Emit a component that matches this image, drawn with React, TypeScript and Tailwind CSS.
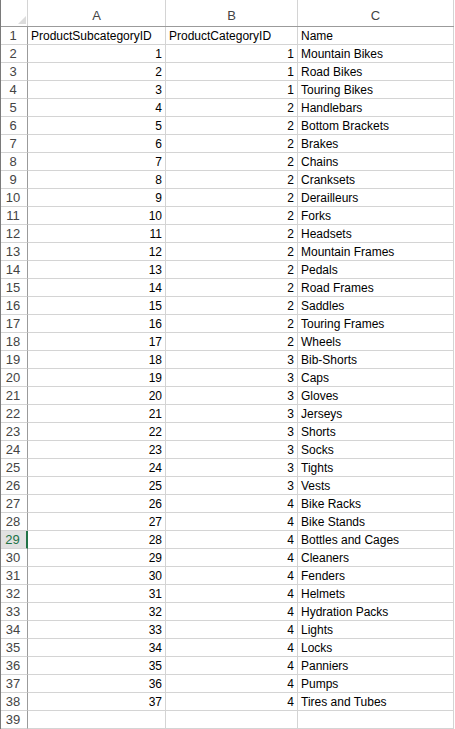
const rows: [number, number, string][] = [
  [1, 1, "Mountain Bikes"],
  [2, 1, "Road Bikes"],
  [3, 1, "Touring Bikes"],
  [4, 2, "Handlebars"],
  [5, 2, "Bottom Brackets"],
  [6, 2, "Brakes"],
  [7, 2, "Chains"],
  [8, 2, "Cranksets"],
  [9, 2, "Derailleurs"],
  [10, 2, "Forks"],
  [11, 2, "Headsets"],
  [12, 2, "Mountain Frames"],
  [13, 2, "Pedals"],
  [14, 2, "Road Frames"],
  [15, 2, "Saddles"],
  [16, 2, "Touring Frames"],
  [17, 2, "Wheels"],
  [18, 3, "Bib-Shorts"],
  [19, 3, "Caps"],
  [20, 3, "Gloves"],
  [21, 3, "Jerseys"],
  [22, 3, "Shorts"],
  [23, 3, "Socks"],
  [24, 3, "Tights"],
  [25, 3, "Vests"],
  [26, 4, "Bike Racks"],
  [27, 4, "Bike Stands"],
  [28, 4, "Bottles and Cages"],
  [29, 4, "Cleaners"],
  [30, 4, "Fenders"],
  [31, 4, "Helmets"],
  [32, 4, "Hydration Packs"],
  [33, 4, "Lights"],
  [34, 4, "Locks"],
  [35, 4, "Panniers"],
  [36, 4, "Pumps"],
  [37, 4, "Tires and Tubes"],
];

const font = "font-['Liberation_Sans',Arial,sans-serif] text-[12px]";
const cols = "grid grid-cols-[27px_138px_132px_156px]";

function RowHeader({ n, active }: { n: number; active?: boolean }) {
  return active ? (
    <div className="h-[18px] border-b border-[#d4d4d4] border-r-2 border-r-[#217346] bg-[#e1e1e1] pr-[2px] text-center text-[13px] leading-[18px] text-[#217346]">
      {n}
    </div>
  ) : (
    <div className="h-[18px] border-b border-[#d4d4d4] border-r border-r-[#9b9b9b] bg-white pr-[2px] text-center text-[13px] leading-[18px] text-[#444]">
      {n}
    </div>
  );
}

function Cell({ children, right }: { children?: React.ReactNode; right?: boolean }) {
  return (
    <div
      className={`h-[18px] border-b border-r border-[#d4d4d4] px-[3px] leading-[18px] text-black whitespace-nowrap overflow-hidden ${
        right ? "text-right" : "text-left"
      }`}
    >
      {children}
    </div>
  );
}

export default function App() {
  return (
    <div className={`w-[455px] h-[729px] overflow-hidden bg-white ${font}`}>
      <div className="border-l border-l-[#7a7a7a] w-[454px]">
        {/* Spaltenköpfe */}
        <div className={`${cols} h-[27px] border-b border-[#9b9b9b]`}>
          <div className="relative border-r border-[#d4d4d4]">
            <svg className="absolute left-[17px] top-[16px]" width="8" height="8" viewBox="0 0 8 8">
              <polygon points="8,0 8,8 0,8" fill="#dcdcdc" />
            </svg>
          </div>
          {["A", "B", "C"].map((c) => (
            <div key={c} className="border-r border-[#d4d4d4] pt-[8px] text-center text-[13px] leading-[16px] text-[#444]">
              {c}
            </div>
          ))}
        </div>

        <div className={cols}>
          <RowHeader n={1} />
          <Cell>ProductSubcategoryID</Cell>
          <Cell>ProductCategoryID</Cell>
          <Cell>Name</Cell>
        </div>

        {rows.map(([id, cat, name], i) => (
          <div key={id} className={cols}>
            <RowHeader n={i + 2} active={i + 2 === 29} />
            <Cell right>{id}</Cell>
            <Cell right>{cat}</Cell>
            <Cell>{name}</Cell>
          </div>
        ))}

        <div className={cols}>
          <RowHeader n={39} />
          <Cell />
          <Cell />
          <Cell />
        </div>
      </div>
    </div>
  );
}
